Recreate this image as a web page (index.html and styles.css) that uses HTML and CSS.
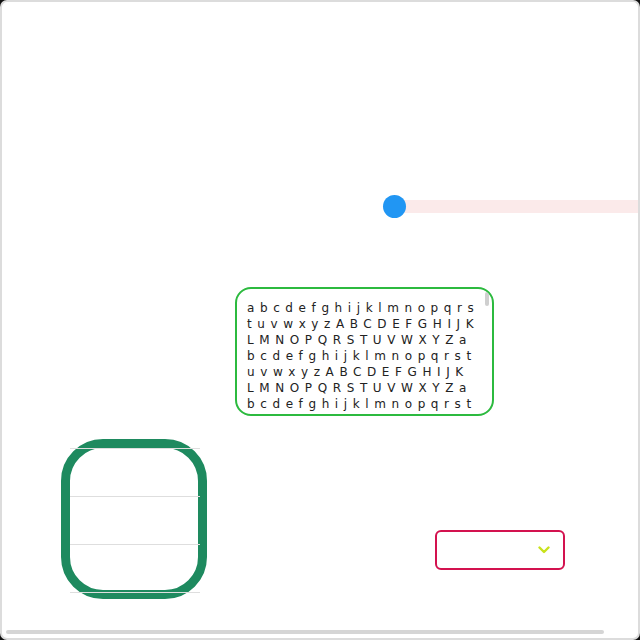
FILE: index.html
```html
<!DOCTYPE html>
<html lang="en">
<head>
<meta charset="utf-8">
<title>Controls</title>
<link rel="stylesheet" href="styles.css">
</head>
<body>
<div class="stage">
  <div class="slider-row">
    <div class="slider">
      <div class="slider-track"></div>
      <div class="slider-thumb"></div>
    </div>
  </div>
  <div class="textbox">
    <div class="textbox-inner">abcdefghijklmnopqrstuvwxyzABCDEFGHIJKLMNOPQRSTUVWXYZabcdefghijklmnopqrstuvwxyzABCDEFGHIJKLMNOPQRSTUVWXYZabcdefghijklmnopqrstuvwxyzABCDEFGHIJKLMNOPQRSTUVWXYZabcdefghijklmnopqrstuvwxyzABCDEFGHIJKLMNOPQRSTUVWXYZabcdefghijklmnopqrstuvwxyzABCDEFGHIJKLMNOPQRSTUVWXYZabcdefghijklmnopqrstuvwxyzABCDEFGHIJKLMNOPQRSTUVWXYZabcdefghijklmnopqrstuvwxyzABCDEFGHIJKLMNOPQRSTUVWXYZabcdefghijklmnopqrstuvwxyzABCDEFGHIJKLMNOPQRSTUVWXYZ</div>
    <div class="textbox-scroll"></div>
  </div>
  <div class="bottom-row">
    <ul class="listbox">
      <li class="list-item"></li>
      <li class="list-item"></li>
      <li class="list-item last"></li>
    </ul>
    <div class="select">
      <svg class="chevron" width="12" height="8" viewBox="0 0 12 8"><polyline points="1.5,1.5 6,6 10.5,1.5" fill="none" stroke="#c9e21c" stroke-width="2.4" stroke-linecap="round" stroke-linejoin="round"/></svg>
    </div>
  </div>
  <div class="page-scroll"></div>
</div>
</body>
</html>
```

FILE: styles.css
```css
html {
  background: #111;
  height: 100%;
}
body {
  margin: 0;
  height: 640px;
  box-sizing: border-box;
  border: 2px solid #dcdcdc;
  border-radius: 7px;
  background: #fff;
  overflow: hidden;
  font-family: "DejaVu Sans", "Noto Sans", sans-serif;
}
.stage {
  position: relative;
  height: 636px;
  overflow: hidden;
}
.page-scroll {
  position: absolute;
  left: 4px;
  bottom: 4px;
  width: 598px;
  height: 4px;
  border-radius: 2px;
  background: #d5d5d5;
}
.slider-row {
  padding-top: 193px;
  padding-left: 381px;
  width: 292px;
}
.slider {
  position: relative;
  height: 23px;
  display: flex;
  align-items: center;
}
.slider-track {
  flex: 1;
  margin-left: 11px;
  height: 13px;
  background: #fbeaea;
}
.slider-thumb {
  position: absolute;
  left: 0;
  top: 0;
  width: 23px;
  height: 23px;
  border-radius: 50%;
  background: #2196f3;
}
.textbox {
  position: relative;
  margin-top: 69px;
  margin-left: 233px;
  width: 259px;
  height: 129px;
  box-sizing: border-box;
  border: 2px solid #2cba3f;
  border-radius: 16px;
  overflow: hidden;
}
.textbox-inner {
  height: 100%;
  width: 255px;
  box-sizing: border-box;
  padding: 11px 12px 0 10px;
  overflow: hidden;
  font-size: 12px;
  line-height: 16px;
  letter-spacing: 5.6px;
  color: #222;
  word-break: break-all;
}
.textbox-scroll {
  position: absolute;
  top: 3px;
  right: 3px;
  width: 4px;
  height: 14px;
  border-radius: 2px;
  background: #cfcfcf;
}
.bottom-row {
  display: flex;
  align-items: flex-start;
  margin-top: 23px;
  padding-left: 59px;
}
.listbox {
  margin: 0;
  padding: 0;
  list-style: none;
  width: 146px;
  height: 160px;
  box-sizing: border-box;
  border: 9px solid #1e8a5f;
  border-radius: 42px;
  flex: none;
}
.list-item {
  width: 130px;
  height: 47px;
  border-top: 1px solid #dedede;
}
.list-item.last {
  border-bottom: 1px solid #dedede;
}
.select {
  margin-left: 228px;
  margin-top: 91px;
  width: 130px;
  height: 40px;
  box-sizing: border-box;
  border: 2px solid #d3124f;
  border-radius: 6px;
  display: flex;
  align-items: center;
  justify-content: flex-end;
  padding-right: 13px;
  flex: none;
}
.chevron {
  display: block;
}
```
